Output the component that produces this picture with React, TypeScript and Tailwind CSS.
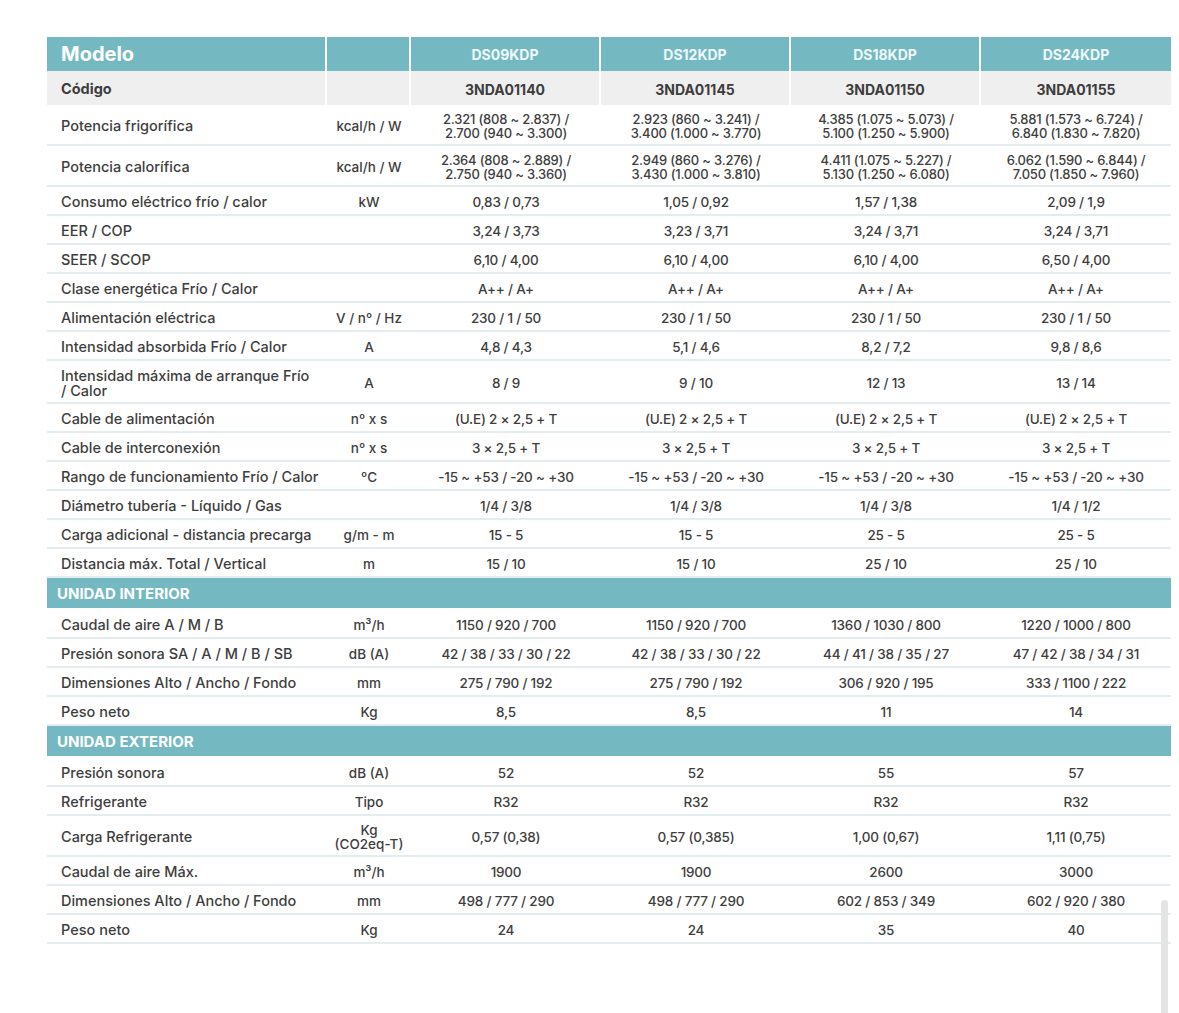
import React from 'react';

// Ficha técnica de los equipos de aire acondicionado (serie DS..KDP)

type SpecRow = {
  label: string;
  unit?: string;
  values: string[];
  height?: string; // alto de la fila si no es la estándar
};

type Section =
  | { kind: 'rows'; rows: SpecRow[] }
  | { kind: 'title'; title: string };

const models = ['DS09KDP', 'DS12KDP', 'DS18KDP', 'DS24KDP'];
const codes = ['3NDA01140', '3NDA01145', '3NDA01150', '3NDA01155'];

const sections: Section[] = [
  {
    kind: 'rows',
    rows: [
      {
        label: 'Potencia frigorífica',
        unit: 'kcal/h / W',
        height: 'h-[41px]',
        values: [
          '2.321 (808 ~ 2.837) /\n2.700 (940 ~ 3.300)',
          '2.923 (860 ~ 3.241) /\n3.400 (1.000 ~ 3.770)',
          '4.385 (1.075 ~ 5.073) /\n5.100 (1.250 ~ 5.900)',
          '5.881 (1.573 ~ 6.724) /\n6.840 (1.830 ~ 7.820)',
        ],
      },
      {
        label: 'Potencia calorífica',
        unit: 'kcal/h / W',
        height: 'h-[41px]',
        values: [
          '2.364 (808 ~ 2.889) /\n2.750 (940 ~ 3.360)',
          '2.949 (860 ~ 3.276) /\n3.430 (1.000 ~ 3.810)',
          '4.411 (1.075 ~ 5.227) /\n5.130 (1.250 ~ 6.080)',
          '6.062 (1.590 ~ 6.844) /\n7.050 (1.850 ~ 7.960)',
        ],
      },
      { label: 'Consumo eléctrico frío / calor', unit: 'kW', values: ['0,83 / 0,73', '1,05 / 0,92', '1,57 / 1,38', '2,09 / 1,9'] },
      { label: 'EER / COP', values: ['3,24 / 3,73', '3,23 / 3,71', '3,24 / 3,71', '3,24 / 3,71'] },
      { label: 'SEER / SCOP', values: ['6,10 / 4,00', '6,10 / 4,00', '6,10 / 4,00', '6,50 / 4,00'] },
      { label: 'Clase energética Frío / Calor', values: ['A++ / A+', 'A++ / A+', 'A++ / A+', 'A++ / A+'] },
      { label: 'Alimentación eléctrica', unit: 'V / nº / Hz', values: ['230 / 1 / 50', '230 / 1 / 50', '230 / 1 / 50', '230 / 1 / 50'] },
      { label: 'Intensidad absorbida Frío / Calor', unit: 'A', values: ['4,8 / 4,3', '5,1 / 4,6', '8,2 / 7,2', '9,8 / 8,6'] },
      {
        label: 'Intensidad máxima de arranque Frío\n/ Calor',
        unit: 'A',
        height: 'h-[43px]',
        values: ['8 / 9', '9 / 10', '12 / 13', '13 / 14'],
      },
      {
        label: 'Cable de alimentación',
        unit: 'nº x s',
        values: ['(U.E) 2 × 2,5 + T', '(U.E) 2 × 2,5 + T', '(U.E) 2 × 2,5 + T', '(U.E) 2 × 2,5 + T'],
      },
      { label: 'Cable de interconexión', unit: 'nº x s', values: ['3 × 2,5 + T', '3 × 2,5 + T', '3 × 2,5 + T', '3 × 2,5 + T'] },
      {
        label: 'Rango de funcionamiento Frío / Calor',
        unit: 'ºC',
        values: ['-15 ~ +53 / -20 ~ +30', '-15 ~ +53 / -20 ~ +30', '-15 ~ +53 / -20 ~ +30', '-15 ~ +53 / -20 ~ +30'],
      },
      { label: 'Diámetro tubería - Líquido / Gas', values: ['1/4 / 3/8', '1/4 / 3/8', '1/4 / 3/8', '1/4 / 1/2'] },
      { label: 'Carga adicional - distancia precarga', unit: 'g/m - m', values: ['15 - 5', '15 - 5', '25 - 5', '25 - 5'] },
      { label: 'Distancia máx. Total / Vertical', unit: 'm', values: ['15 / 10', '15 / 10', '25 / 10', '25 / 10'] },
    ],
  },
  { kind: 'title', title: 'UNIDAD INTERIOR' },
  {
    kind: 'rows',
    rows: [
      { label: 'Caudal de aire A / M / B', unit: 'm³/h', values: ['1150 / 920 / 700', '1150 / 920 / 700', '1360 / 1030 / 800', '1220 / 1000 / 800'] },
      {
        label: 'Presión sonora SA / A / M / B / SB',
        unit: 'dB (A)',
        values: ['42 / 38 / 33 / 30 / 22', '42 / 38 / 33 / 30 / 22', '44 / 41 / 38 / 35 / 27', '47 / 42 / 38 / 34 / 31'],
      },
      {
        label: 'Dimensiones Alto / Ancho / Fondo',
        unit: 'mm',
        values: ['275 / 790 / 192', '275 / 790 / 192', '306 / 920 / 195', '333 / 1100 / 222'],
      },
      { label: 'Peso neto', unit: 'Kg', values: ['8,5', '8,5', '11', '14'] },
    ],
  },
  { kind: 'title', title: 'UNIDAD EXTERIOR' },
  {
    kind: 'rows',
    rows: [
      { label: 'Presión sonora', unit: 'dB (A)', values: ['52', '52', '55', '57'] },
      { label: 'Refrigerante', unit: 'Tipo', values: ['R32', 'R32', 'R32', 'R32'] },
      {
        label: 'Carga Refrigerante',
        unit: 'Kg\n(CO2eq-T)',
        height: 'h-[41px]',
        values: ['0,57 (0,38)', '0,57 (0,385)', '1,00 (0,67)', '1,11 (0,75)'],
      },
      { label: 'Caudal de aire Máx.', unit: 'm³/h', values: ['1900', '1900', '2600', '3000'] },
      {
        label: 'Dimensiones Alto / Ancho / Fondo',
        unit: 'mm',
        values: ['498 / 777 / 290', '498 / 777 / 290', '602 / 853 / 349', '602 / 920 / 380'],
      },
      { label: 'Peso neto', unit: 'Kg', values: ['24', '24', '35', '40'] },
    ],
  },
];

const gridCols = 'grid grid-cols-[280px_84px_190px_190px_190px_190px]';

const Row = ({ row }: { row: SpecRow }) => (
  <div
    className={`${gridCols} items-center border-b-2 border-[#e3ecee] pt-[2px] ${row.height ?? 'h-[29px]'}`}
  >
    <div className="whitespace-pre-line pl-[14px] text-[14.5px] leading-[15px] text-[#3e3e3e]">
      {row.label}
    </div>
    <div className="whitespace-pre-line text-center text-[13.5px] leading-[14px] text-[#3e3e3e]">
      {row.unit}
    </div>
    {row.values.map((v, i) => (
      <div
        key={i}
        className={`whitespace-pre-line text-center tracking-[-0.2px] text-[#3e3e3e] ${
          v.includes('\n') ? 'text-[13px] leading-[14px]' : 'text-[13.5px] leading-[14px]'
        }`}
      >
        {v}
      </div>
    ))}
  </div>
);

const App = () => {
  return (
    <div className="relative h-[1013px] w-[1179px] overflow-hidden bg-white font-['Inter','Liberation_Sans',sans-serif] font-medium">
      <div className="ml-[47px] mt-[37px] w-[1124px]">
        {/* cabecera: modelos */}
        <div className={`${gridCols} h-[34px] bg-white`}>
          <div className="flex items-center border-r-2 border-white bg-[#74b9c2] pl-[14px] text-[20px] font-bold text-white">
            Modelo
          </div>
          <div className="border-r-2 border-white bg-[#74b9c2]" />
          {models.map((m, i) => (
            <div
              key={m}
              className={`flex items-center justify-center bg-[#74b9c2] text-[14px] font-bold text-[#eef8f9] ${
                i < 3 ? 'border-r-2 border-white' : ''
              }`}
            >
              {m}
            </div>
          ))}
        </div>

        {/* códigos */}
        <div className={`${gridCols} h-[34px]`}>
          <div className="flex items-center border-r-2 border-white bg-[#efefef] pl-[14px] pt-[2px] text-[14.5px] font-bold text-[#3d3d3d]">
            Código
          </div>
          <div className="border-r-2 border-white bg-[#efefef]" />
          {codes.map((c, i) => (
            <div
              key={c}
              className={`flex items-center justify-center bg-[#efefef] pt-[2px] text-[14px] font-bold text-[#3d3d3d] ${
                i < 3 ? 'border-r-2 border-white' : ''
              }`}
            >
              {c}
            </div>
          ))}
        </div>

        {sections.map((s, i) =>
          s.kind === 'title' ? (
            <div
              key={i}
              className="flex h-[32px] items-center border-b-2 border-white bg-[#74b9c2] pl-[10px] pt-[2px] text-[15px] font-bold text-white"
            >
              {s.title}
            </div>
          ) : (
            <div key={i}>
              {s.rows.map((r, j) => (
                <Row key={j} row={r} />
              ))}
            </div>
          ),
        )}
      </div>

      {/* barra de desplazamiento */}
      <div className="absolute left-[1161px] top-[900px] h-[113px] w-[7px] rounded-t-full bg-[#e4e4e4]" />
    </div>
  );
};

export default App;
